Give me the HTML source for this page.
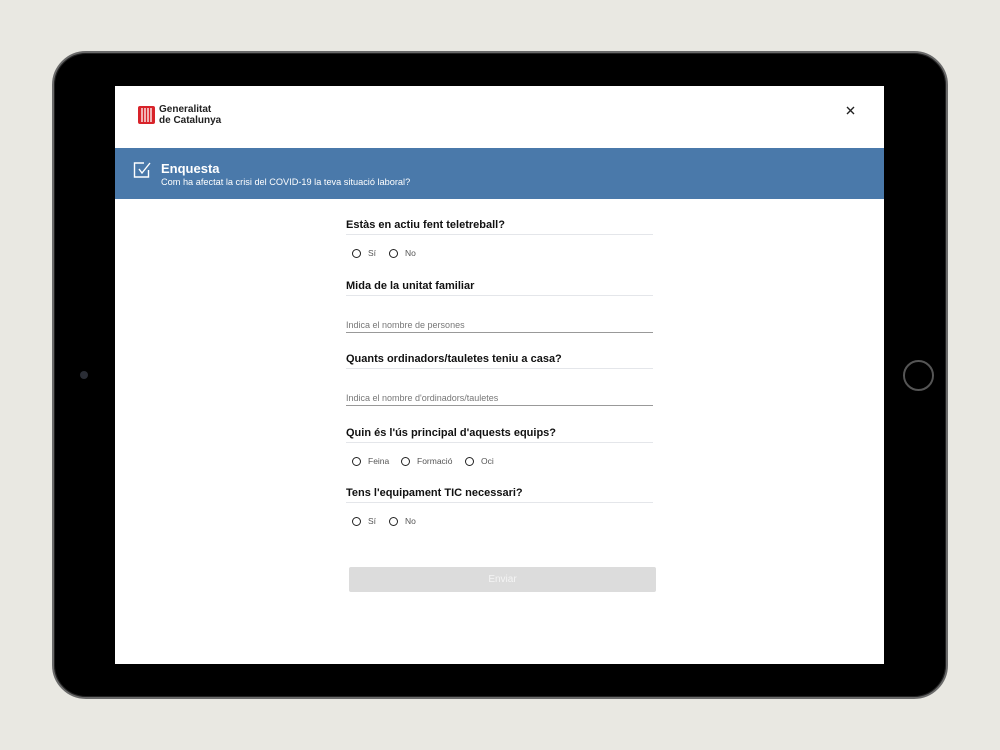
<!DOCTYPE html>
<html><head><meta charset="utf-8"><style>
*{margin:0;padding:0;box-sizing:border-box}
body{width:1000px;height:750px;background:#e9e8e2;position:relative;overflow:hidden;font-family:"Liberation Sans",sans-serif}
.dev{position:absolute;left:52px;top:51px;width:896px;height:648px;background:#000;border-radius:34px;border:2px solid #6a6a6a;box-shadow:inset 0 0 0 1px #222}
.cam{position:absolute;left:80px;top:371px;width:8px;height:8px;border-radius:50%;background:#2a2d35}
.home{position:absolute;left:903px;top:360px;width:31px;height:31px;border-radius:50%;border:2px solid #555}
.scr{position:absolute;left:115px;top:86px;width:769px;height:578px;background:#fff;overflow:hidden}
.a{position:absolute}
.q{position:absolute;left:231px;font-weight:bold;font-size:11px;color:#111;top:0}
.hl{position:absolute;left:231px;width:307px;height:1px;background:#e4e6ea}
.r{position:absolute;font-size:8.5px;color:#555;display:flex;align-items:center}
.r i{display:inline-block;width:9px;height:9px;border:1.5px solid #222;border-radius:50%;margin-right:7px}
.in{position:absolute;left:231px;width:307px;font-size:9px;color:#777;border-bottom:1.5px solid #999;padding-bottom:2px}
</style></head><body>
<div class="dev"></div><div class="cam"></div><div class="home"></div>
<div class="scr">
 <svg class="a" style="left:23px;top:20px" width="17" height="18" viewBox="0 0 17 18"><rect width="17" height="18" rx="2" fill="#d8232a"/><g stroke="#fff" stroke-width="1.3"><line x1="4" y1="2" x2="4" y2="16"/><line x1="7" y1="2" x2="7" y2="16"/><line x1="10" y1="2" x2="10" y2="16"/><line x1="13" y1="2" x2="13" y2="16"/></g></svg>
 <div class="a" style="left:44px;top:19px;font-size:10px;font-weight:bold;color:#222;line-height:10.5px">Generalitat<br>de Catalunya</div>
 <svg class="a" style="left:731px;top:20px" width="9" height="9"><path d="M1 1L8 8M8 1L1 8" stroke="#222" stroke-width="1.4"/></svg>
 <div class="a" style="left:0;top:62px;width:769px;height:51px;background:#4a79aa"></div>
 <svg class="a" style="left:18px;top:75px" width="20" height="18" viewBox="0 0 20 18"><path d="M11 2H1.5v14h14V9" fill="none" stroke="#fff" stroke-width="1.4"/><path d="M6 8l3 4 8-10" fill="none" stroke="#fff" stroke-width="1.4"/></svg>
 <div class="a" style="left:46px;top:75px;font-size:13px;font-weight:bold;color:#fff">Enquesta</div>
 <div class="a" style="left:46px;top:91px;font-size:9.2px;color:#fff">Com ha afectat la crisi del COVID-19 la teva situació laboral?</div>

 <div class="q" style="top:133px">Estàs en actiu fent teletreball?</div><div class="hl" style="top:148px"></div>
 <div class="r" style="left:237px;top:162px"><i></i>Sí</div><div class="r" style="left:274px;top:162px"><i></i>No</div>
 <div class="q" style="top:194px">Mida de la unitat familiar</div><div class="hl" style="top:209px"></div>
 <div class="in" style="top:234px">Indica el nombre de persones</div>
 <div class="q" style="top:267px">Quants ordinadors/tauletes teniu a casa?</div><div class="hl" style="top:282px"></div>
 <div class="in" style="top:307px">Indica el nombre d'ordinadors/tauletes</div>
 <div class="q" style="top:341px">Quin és l'ús principal d'aquests equips?</div><div class="hl" style="top:356px"></div>
 <div class="r" style="left:237px;top:370px"><i></i>Feina</div><div class="r" style="left:286px;top:370px"><i></i>Formació</div><div class="r" style="left:350px;top:370px"><i></i>Oci</div>
 <div class="q" style="top:401px">Tens l'equipament TIC necessari?</div><div class="hl" style="top:416px"></div>
 <div class="r" style="left:237px;top:430px"><i></i>Sí</div><div class="r" style="left:274px;top:430px"><i></i>No</div>
 <div class="a" style="left:234px;top:481px;width:307px;height:25px;background:#dcdcdc;border-radius:2px;color:#f4f4f4;font-size:10px;text-align:center;line-height:25px">Enviar</div>
</div>
</body></html>
